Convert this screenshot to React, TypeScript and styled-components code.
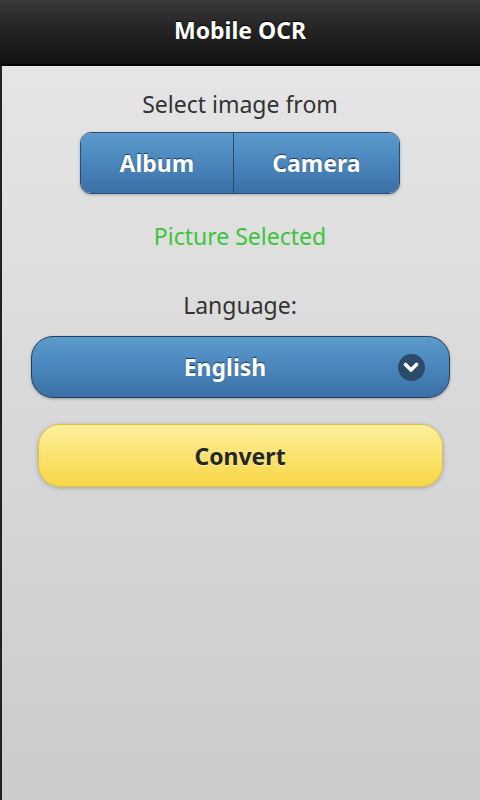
import React from 'react';
import styled, { createGlobalStyle } from 'styled-components';

const GlobalStyle = createGlobalStyle`
    html, body {
        margin: 0;
        padding: 0;
        height: 100%;
    }
    body {
        font-family: "Noto Sans", "Open Sans", sans-serif;
    }
    #root {
        height: 100%;
    }
`;

const Screen = styled.div`
    display: flex;
    flex-direction: column;
    width: 480px;
    height: 800px;
    overflow: hidden;
`;

const Header = styled.header`
    height: 66px;
    flex: none;
    display: flex;
    align-items: center;
    justify-content: center;
    padding-bottom: 4px;
    box-sizing: border-box;
    background: linear-gradient(#3a3a3a 0%, #262626 40%, #111 100%);
    border-bottom: 2px solid #050505;
    color: #fff;
    font-size: 23px;
    font-weight: 700;
    text-shadow: 0 -1px 1px #000;
`;

const Content = styled.main`
    flex: 1;
    display: flex;
    flex-direction: column;
    align-items: center;
    padding-top: 24px;
    background: linear-gradient(#e5e5e5, #cbcbcb);
    box-shadow: inset 2px 0 0 #222;
`;

const Label = styled.div<{ $color?: string; $gap: number }>`
    font-size: 23px;
    line-height: 28px;
    color: ${(p) => p.$color || '#333'};
    margin-bottom: ${(p) => p.$gap}px;
`;

const Segmented = styled.div`
    display: flex;
    width: 320px;
    height: 62px;
    box-sizing: border-box;
    border: 1px solid #2a4e73;
    border-radius: 11px;
    overflow: hidden;
    box-shadow: 0 1px 3px rgba(0, 0, 0, 0.25);
    margin-bottom: 28px;
`;

const BlueFill = `
    background: linear-gradient(#5b9acb, #4a86bd 50%, #3a70a5);
    color: #fff;
    font-weight: 700;
    font-size: 23px;
    text-shadow: 0 -1px 1px #1e3c5c;
`;

const SegButton = styled.button<{ $first?: boolean }>`
    ${BlueFill}
    flex: 1 1 auto;
    border: none;
    border-left: ${(p) => (p.$first ? 'none' : '1px solid #244a70')};
    font-family: inherit;
    padding: 0;
`;

const Select = styled.div`
    ${BlueFill}
    position: relative;
    width: 419px;
    height: 62px;
    box-sizing: border-box;
    border: 1px solid #22405f;
    border-radius: 22px;
    display: flex;
    align-items: center;
    justify-content: center;
    padding-right: 30px;
    box-shadow: 0 1px 3px rgba(0, 0, 0, 0.3);
    margin-bottom: 26px;
`;

const Chevron = styled.span`
    position: absolute;
    right: 24px;
    top: 50%;
    margin-top: -13px;
    width: 27px;
    height: 27px;
    border-radius: 50%;
    background: #2c4b6b;
    display: flex;
    align-items: center;
    justify-content: center;
`;

const ConvertButton = styled.button`
    width: 405px;
    height: 63px;
    box-sizing: border-box;
    border: 1px solid #e3bf3e;
    border-radius: 22px;
    background: linear-gradient(#fdf09e, #fce26b 55%, #f9d647);
    color: #262626;
    font-family: inherit;
    font-size: 23px;
    font-weight: 700;
    text-shadow: 0 1px 0 rgba(255, 255, 255, 0.5);
    box-shadow: 0 1px 4px rgba(0, 0, 0, 0.25);
`;

export default function App() {
    return (
        <Screen>
            <GlobalStyle />
            <Header>Mobile OCR</Header>
            <Content>
                <Label $gap={14}>Select image from</Label>
                <Segmented>
                    <SegButton $first>Album</SegButton>
                    <SegButton>Camera</SegButton>
                </Segmented>
                <Label $color="#3cc43c" $gap={41}>Picture Selected</Label>
                <Label $gap={17}>Language:</Label>
                <Select>
                    English
                    <Chevron>
                        <svg width="16" height="11" viewBox="0 0 16 11">
                            <path d="M2.5 2.5 L8 8 L13.5 2.5" fill="none" stroke="#fff" strokeWidth="3.6" strokeLinecap="round" strokeLinejoin="round" />
                        </svg>
                    </Chevron>
                </Select>
                <ConvertButton>Convert</ConvertButton>
            </Content>
        </Screen>
    );
}
